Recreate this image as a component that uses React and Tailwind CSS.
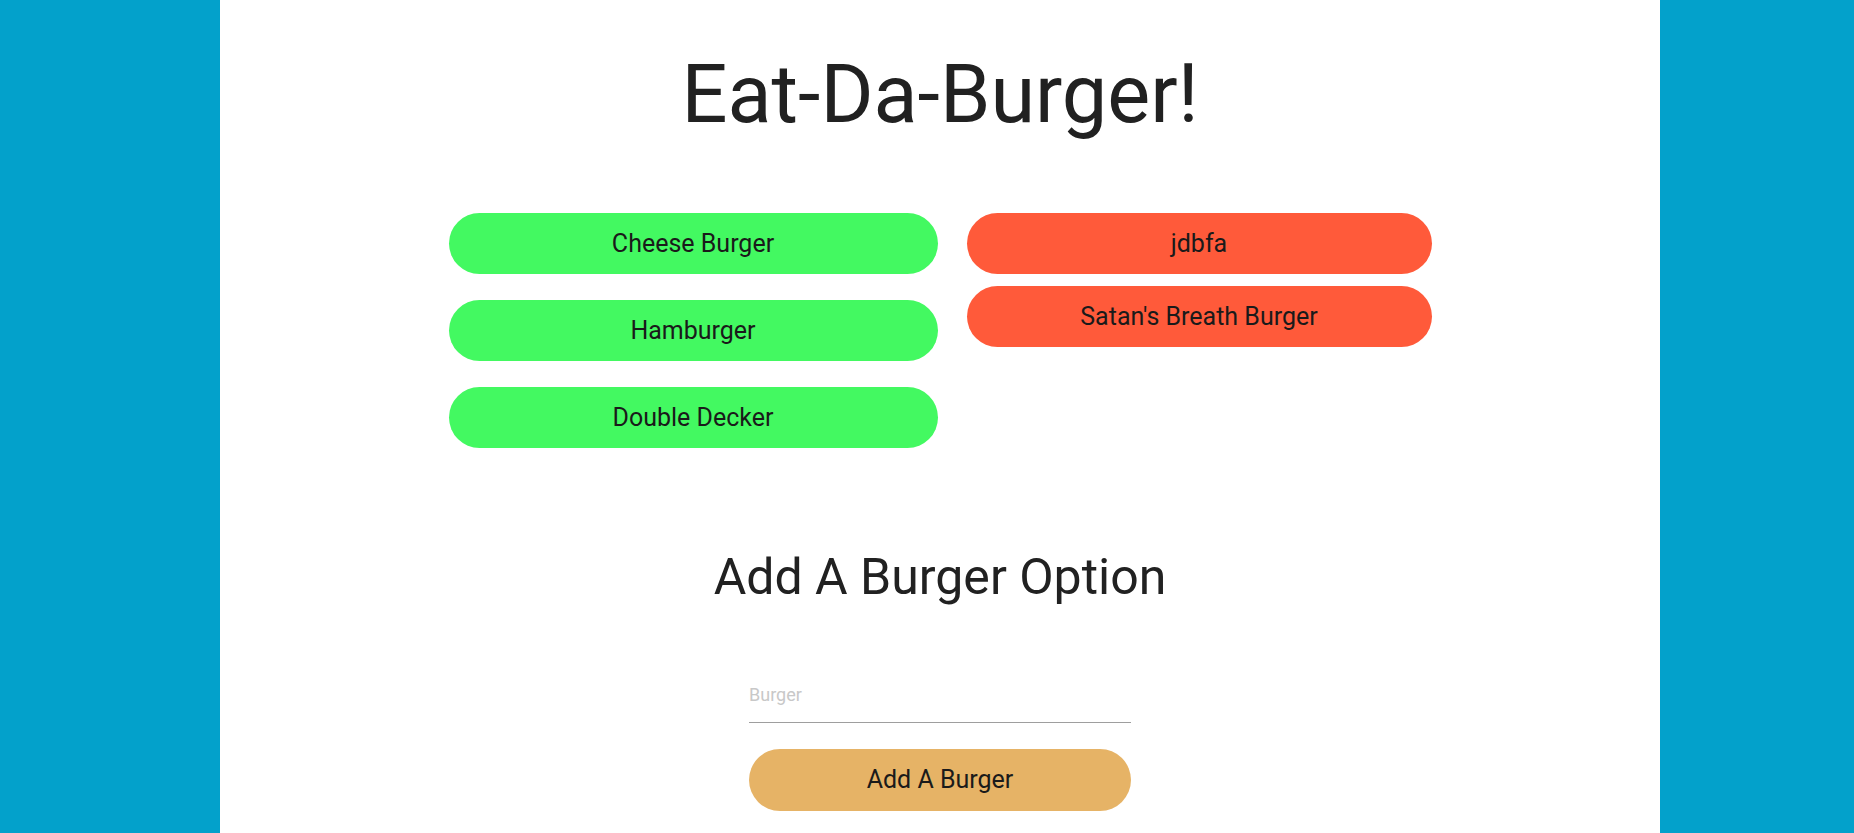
import { useState } from "react";

const EATEN = ["Cheese Burger", "Hamburger", "Double Decker"];
const DEVOURED = ["jdbfa", "Satan's Breath Burger"];

const App = () => {
    const [name, setName] = useState("");

    return (
        <div className="min-h-screen bg-[#03a1cb] font-['Roboto',sans-serif] text-[#212121]">
            <div className="ml-[220px] flex min-h-[833px] w-[1440px] flex-col items-center bg-white">
                <h1 className="mt-[54px] text-[81px] leading-none font-normal">Eat-Da-Burger!</h1>

                <div className="mt-[78px] flex items-start gap-[29px]">
                    <div className="flex w-[489px] flex-col gap-[26px]">
                        {EATEN.map((b) => (
                            <button
                                key={b}
                                className="flex h-[61px] items-center justify-center rounded-full bg-[#43f961] text-[25px] text-[#1a1a1a]"
                            >
                                {b}
                            </button>
                        ))}
                    </div>
                    <div className="flex w-[465px] flex-col gap-[12px]">
                        {DEVOURED.map((b) => (
                            <button
                                key={b}
                                className="flex h-[61px] items-center justify-center rounded-full bg-[#ff5a3a] text-[25px] text-[#1a1a1a]"
                            >
                                {b}
                            </button>
                        ))}
                    </div>
                </div>

                <h2 className="mt-[104px] text-[50px] leading-none font-normal">Add A Burger Option</h2>

                <div className="mt-[75px] flex w-[382px] flex-col">
                    <input
                        value={name}
                        onChange={(e) => setName(e.target.value)}
                        placeholder="Burger"
                        className="h-[46px] w-full border-b border-[#9e9e9e] pb-[10px] text-[18px] outline-none placeholder:text-[#c8c8c8]"
                    />
                    <button className="mt-[26px] flex h-[62px] w-full items-center justify-center rounded-full bg-[#e6b366] text-[25px] text-[#1a1a1a]">
                        Add A Burger
                    </button>
                </div>
            </div>
        </div>
    );
};

export default App;
